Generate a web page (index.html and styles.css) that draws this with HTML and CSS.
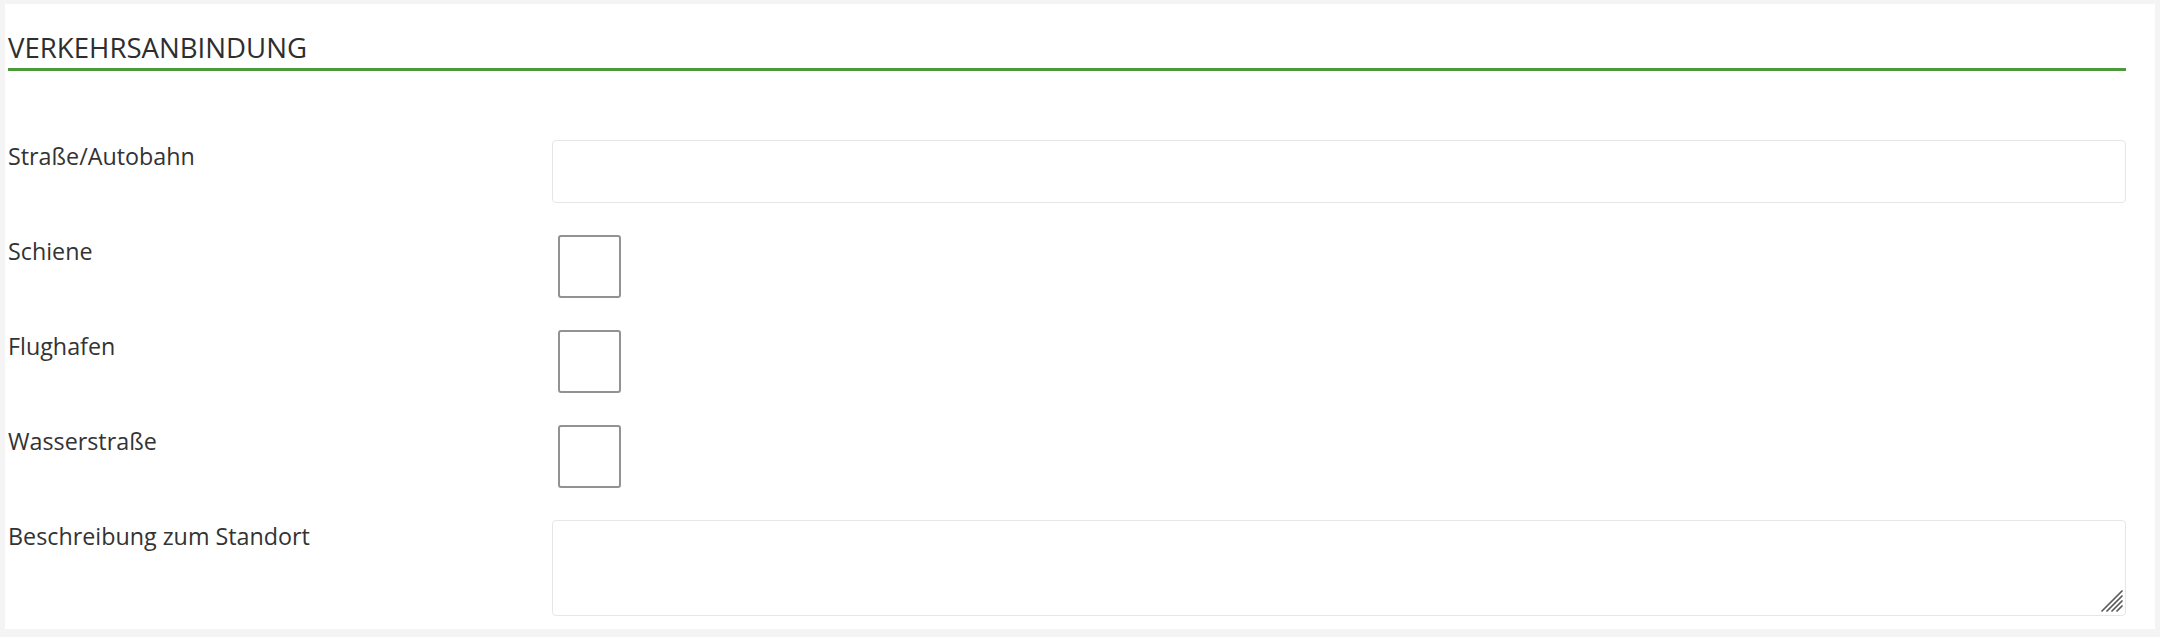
FILE: index.html
```html
<!DOCTYPE html>
<html lang="de">
<head>
  <meta charset="UTF-8" />
  <meta name="viewport" content="width=device-width, initial-scale=1" />
  <title>Verkehrsanbindung</title>
  <link rel="stylesheet" href="styles.css">
</head>
<body>
  <div class="card">
    <h2 class="section-title">VERKEHRSANBINDUNG</h2>

    <form class="form">
      <div class="row">
        <label for="strasse">Straße/Autobahn</label>
        <input type="text" id="strasse" class="text-input">
      </div>
      <div class="row">
        <label for="schiene">Schiene</label>
        <input type="checkbox" id="schiene" class="check">
      </div>
      <div class="row">
        <label for="flughafen">Flughafen</label>
        <input type="checkbox" id="flughafen" class="check">
      </div>
      <div class="row">
        <label for="wasser">Wasserstraße</label>
        <input type="checkbox" id="wasser" class="check">
      </div>
      <div class="row">
        <label for="beschreibung">Beschreibung zum Standort</label>
        <div class="area-wrap">
          <textarea id="beschreibung" class="text-area"></textarea>
          <svg class="grip" width="22" height="22" viewBox="0 0 22 22" aria-hidden="true">
            <g stroke="#5a5a5a" stroke-width="1.7" stroke-linecap="round">
              <line x1="1" y1="21" x2="21" y2="1" />
              <line x1="6" y1="21" x2="21" y2="6" />
              <line x1="11" y1="21" x2="21" y2="11" />
              <line x1="16" y1="21" x2="21" y2="16" />
            </g>
          </svg>
        </div>
      </div>
    </form>
  </div>
</body>
</html>
```

FILE: styles.css
```css
body {
  margin: 0;
  background: #f4f4f4;
  font-family: 'Open Sans', 'Liberation Sans', sans-serif;
  color: #333;
}
.card {
  background: #fff;
  margin: 4px 5px 0 5px;
  padding: 23px 29px 13px 3px;
}
.section-title {
  margin: 0;
  font-size: 27.6px;
  font-weight: 400;
  line-height: 40px;
  padding-bottom: 1px;
  border-bottom: 3px solid #4b9a3a;
  color: #2e2e2e;
}
.form {
  margin-top: 69px;
  display: flex;
  flex-direction: column;
  gap: 32px;
}
.row {
  display: grid;
  grid-template-columns: 544px 1fr;
  align-items: start;
}
.row label {
  font-size: 23.3px;
  line-height: 33px;
}
.text-input {
  box-sizing: border-box;
  height: 63px;
  margin: 0;
  border: 1px solid #e6e6e6;
  border-radius: 4px;
  font: inherit;
}
.area-wrap {
  position: relative;
  display: flex;
}
.text-area {
  box-sizing: border-box;
  flex: 1;
  height: 96px;
  margin: 0;
  border: 1px solid #e6e6e6;
  border-radius: 4px;
  font: inherit;
  resize: none;
}
.grip {
  position: absolute;
  right: 3px;
  bottom: 4px;
  pointer-events: none;
}
.check {
  appearance: none;
  box-sizing: border-box;
  width: 63px;
  height: 63px;
  margin: 0 0 0 6px;
  border: 2px solid #929292;
  border-radius: 3px;
  background: #fff;
}
```
